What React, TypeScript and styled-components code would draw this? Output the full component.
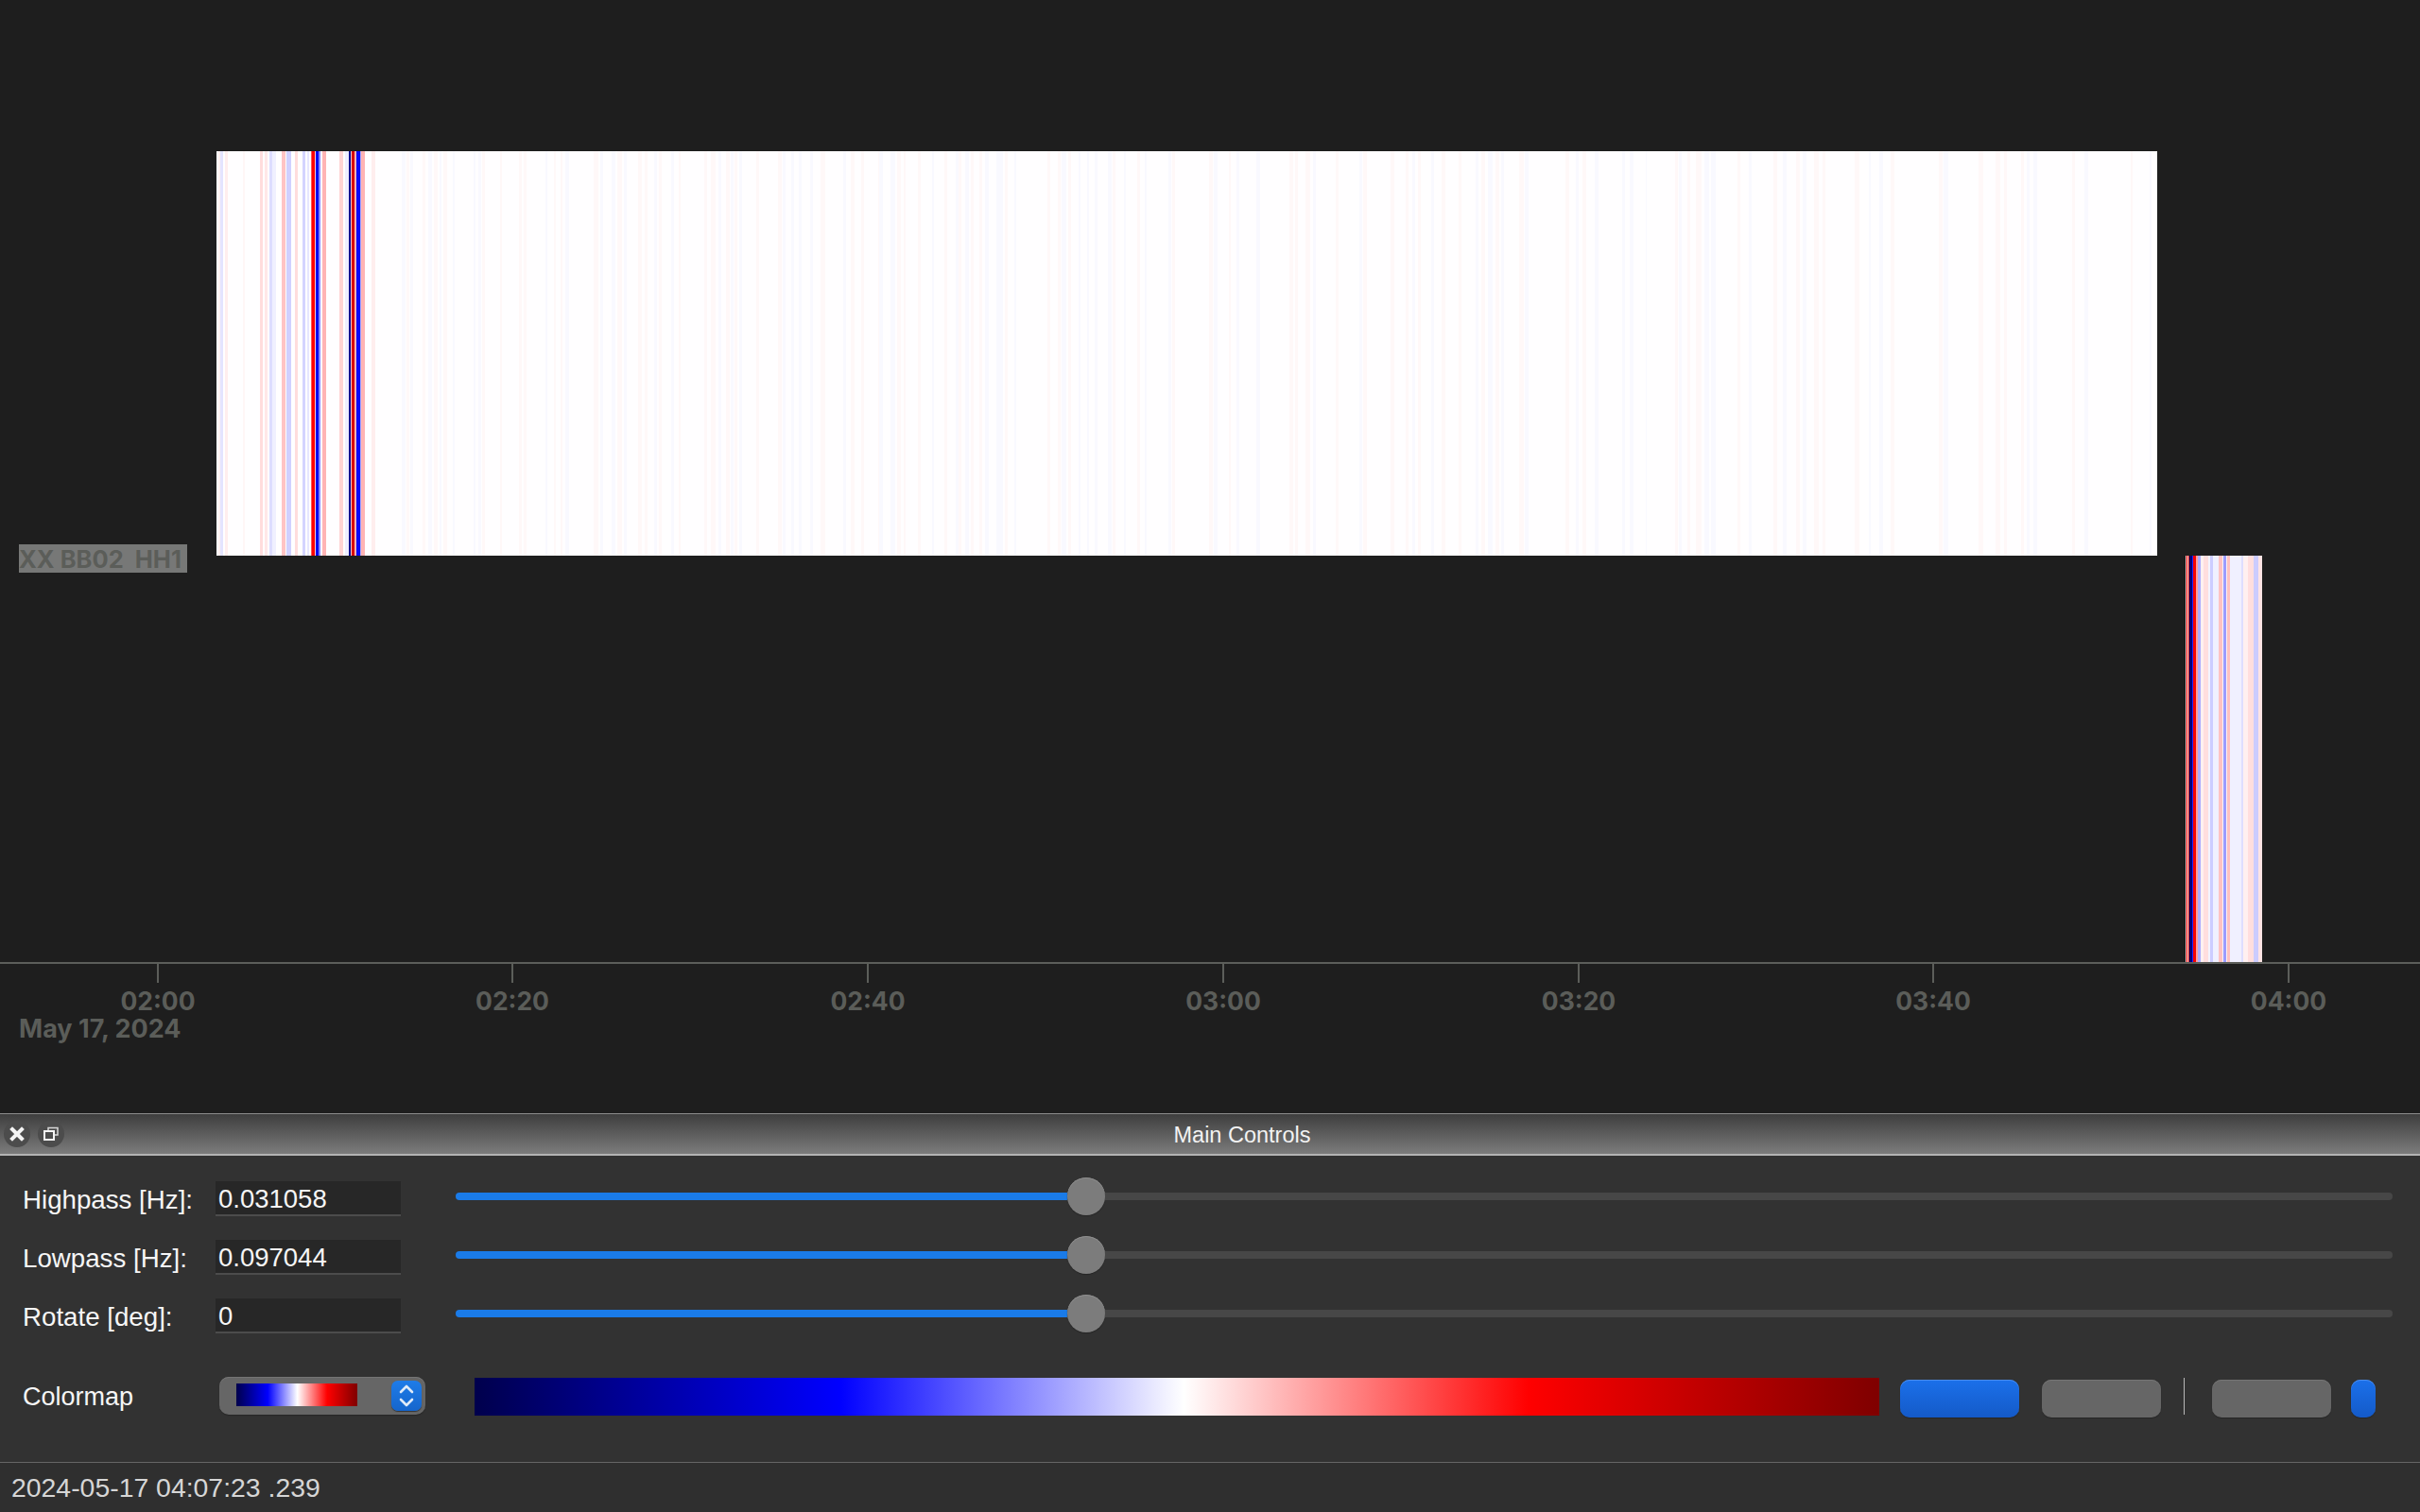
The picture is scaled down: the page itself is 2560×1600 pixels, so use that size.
import React from 'react';
import styled, { createGlobalStyle } from 'styled-components';

const GlobalStyle = createGlobalStyle`
  html, body {
    margin: 0;
    height: 100%;
    background: #1e1e1e;
    overflow: hidden;
  }
  * {
    box-sizing: border-box;
  }
`;

const PINK = '#fff8f8';
const LAV = '#f9f9ff';

type Span = [number, number, number]; // start px, end px, 0 = pink / 1 = lavender

const toStripes = (base: number, scale: number, spans: Span[]) =>
    spans.map(([a, b, kind]) => ({ x: base + a / scale, w: (b - a) / scale, color: kind ? LAV : PINK }));

const faintStripes = [
    ...toStripes(380, 3, [
        [38, 50, 0], [135, 147, 1], [150, 160, 0], [162, 172, 1], [200, 210, 0], [220, 230, 1], [238, 248, 0],
        [255, 262, 1], [268, 278, 0], [296, 302, 1], [363, 370, 1], [378, 386, 1], [390, 400, 0], [448, 452, 0],
        [507, 517, 0], [522, 530, 0], [590, 597, 1], [617, 625, 0], [640, 645, 0], [655, 665, 1], [745, 760, 0],
        [765, 775, 1], [800, 812, 1], [820, 835, 0], [840, 850, 1], [885, 897, 0], [905, 915, 0], [937, 945, 1],
        [950, 960, 0], [990, 1000, 1], [1015, 1020, 0], [1095, 1105, 0], [1115, 1130, 0], [1140, 1150, 1],
        [1165, 1175, 0], [1180, 1187, 1], [1190, 1200, 0], [1205, 1215, 1], [1260, 1270, 0], [1330, 1340, 0],
        [1345, 1352, 1], [1372, 1380, 1], [1395, 1405, 1], [1430, 1440, 1], [1465, 1478, 0], [1535, 1545, 1],
    ]),
    ...toStripes(900, 2.24, [
        [0, 10, 0], [25, 32, 0], [65, 72, 0], [68, 76, 1], [95, 105, 1], [110, 118, 0], [125, 130, 0], [158, 165, 0],
        [193, 198, 1], [222, 228, 0], [248, 255, 1], [255, 262, 0], [272, 280, 1], [285, 292, 0], [305, 312, 0],
        [318, 326, 1], [345, 360, 1], [365, 372, 0], [388, 393, 1], [465, 472, 0], [490, 498, 0], [500, 510, 1],
        [515, 522, 0], [540, 545, 1], [560, 565, 1], [578, 584, 1], [610, 618, 1], [620, 628, 0], [648, 652, 1],
        [678, 685, 0], [697, 702, 1], [752, 760, 1], [762, 768, 0], [850, 858, 0], [860, 868, 1], [895, 900, 0],
        [915, 920, 1], [962, 970, 1], [1040, 1048, 0], [1052, 1060, 0], [1078, 1088, 0], [1095, 1102, 1],
        [1150, 1156, 0], [1205, 1212, 1], [1215, 1222, 0], [1280, 1288, 0], [1315, 1322, 0], [1330, 1338, 1],
        [1343, 1350, 0], [1375, 1383, 1], [1400, 1410, 0], [1440, 1447, 0], [1480, 1487, 1], [1495, 1503, 0],
        [1510, 1520, 1], [1527, 1537, 0], [1540, 1548, 1],
    ]),
    ...toStripes(1600, 2.24, [
        [15, 27, 0], [28, 38, 1], [125, 135, 0], [150, 157, 1], [165, 175, 0], [195, 203, 1], [260, 267, 1],
        [278, 287, 1], [315, 318, 1], [385, 392, 0], [395, 402, 1], [415, 422, 0], [435, 447, 0], [455, 465, 1],
        [470, 482, 1], [532, 540, 0], [560, 567, 1], [618, 628, 0], [640, 650, 1], [672, 680, 0], [688, 696, 1],
        [715, 725, 0], [735, 742, 0], [810, 822, 0], [845, 850, 1], [870, 878, 1], [897, 905, 0], [1010, 1020, 0],
        [1022, 1033, 1], [1105, 1115, 0], [1145, 1155, 0], [1165, 1172, 0], [1205, 1212, 0], [1218, 1225, 1],
        [1235, 1243, 1], [1325, 1332, 0], [1355, 1365, 1], [1465, 1470, 0], [1510, 1515, 1],
    ]),
];

// strong part at the start of the long trace, [x0, x1, colour]
const burstStripes: [number, number, string][] = [
    [231, 233, '#fff0f0'], [233, 236, '#e4e4ff'], [238, 241, '#ffeeee'], [257, 259, '#fff6f6'],
    [275, 278, '#ffdddd'], [280, 283, '#ffe8e8'], [285, 288, '#ddddff'], [288, 292, '#f0f0ff'],
    [298, 302, '#ffc4c4'], [303, 308, '#d0d0ff'], [312, 315, '#ffdddd'], [320, 323, '#d4d4ff'], [325, 327, '#e6e6ff'],
    [329, 330, '#ff5555'], [330, 333, '#ff0000'], [333, 334, '#ffd0d0'], [334, 337, '#0000f0'], [337, 339, '#8888ff'],
    [341, 345, '#ffb4b4'], [359, 363, '#ffd4d4'], [365, 369, '#eeeeff'], [369, 371, '#000090'], [371, 372, '#ffc8c8'],
    [372, 375, '#d80000'], [375, 377, '#ffb0b0'], [377, 381, '#0808f8'], [381, 382, '#aaaaff'], [382, 386, '#ffb4b4'],
    [393, 397, '#ffeeee'],
];

const shortStripes: [number, number, string][] = [
    [2312, 2313, '#ffc8c8'], [2313, 2314, '#e00000'], [2314, 2315, '#ffffff'], [2315, 2316, '#c00000'],
    [2316, 2319, '#00007c'], [2319, 2320, '#2222ff'], [2320, 2323, '#f40000'], [2323, 2325, '#ff9c9c'],
    [2325, 2328, '#aaaaff'], [2328, 2331, '#fff0f0'], [2331, 2336, '#ffdede'], [2336, 2338, '#f4f4ff'],
    [2338, 2341, '#ccccff'], [2341, 2347, '#f0f0ff'], [2347, 2351, '#ffc2c2'], [2351, 2352, '#f4f4ff'],
    [2352, 2355, '#9c9cff'], [2355, 2356, '#fff0f0'], [2356, 2359, '#ffc2c2'], [2359, 2371, '#f0f0ff'],
    [2371, 2373, '#dedeff'], [2373, 2378, '#fff0f0'], [2378, 2384, '#ffdede'], [2384, 2389, '#ccccff'], [2389, 2393, '#ffe4e4'],
];

const TICKS = [
    { x: 167, label: '02:00' },
    { x: 542, label: '02:20' },
    { x: 918, label: '02:40' },
    { x: 1294, label: '03:00' },
    { x: 1670, label: '03:20' },
    { x: 2045, label: '03:40' },
    { x: 2421, label: '04:00' },
];

const TRACE_BOTTOM = 1018;

const PlotCanvas = () => (
    <PlotSvg width={2560} height={1040} shapeRendering="crispEdges">
        <rect x={229} y={160} width={2053} height={428} fill="#fffeff" />
        {faintStripes.map((s, i) => (
            <rect key={i} x={s.x} y={160} width={s.w} height={428} fill={s.color} />
        ))}
        {burstStripes.map(([a, b, color]) => (
            <rect key={a} x={a} y={160} width={b - a} height={428} fill={color} />
        ))}
        <rect x={2312} y={588} width={81} height={430} fill="#ffffff" />
        {shortStripes.map(([a, b, color]) => (
            <rect key={a} x={a} y={588} width={b - a} height={430} fill={color} />
        ))}
        <rect x={0} y={TRACE_BOTTOM} width={2560} height={2} fill="#5c5e5a" />
        {TICKS.map((t) => (
            <rect key={t.x} x={t.x - 1} y={TRACE_BOTTOM + 2} width={2} height={20} fill="#5c5e5a" />
        ))}
    </PlotSvg>
);

const CloseIcon = () => (
    <svg width={16} height={16} viewBox="0 0 16 16">
        <path d="M3 3 L13 13 M13 3 L3 13" stroke="#f4f4f4" strokeWidth={4} strokeLinecap="square" />
    </svg>
);

const FloatIcon = () => (
    <svg width={18} height={18} viewBox="0 0 18 18" fill="none">
        <path d="M6 5 V2.5 H16 V10 H12.5" stroke="#d8d8d8" strokeWidth={1.5} />
        <rect x={2} y={6} width={10} height={9} stroke="#f4f4f4" strokeWidth={2} />
    </svg>
);

const StepperIcon = () => (
    <svg width={18} height={28} viewBox="0 0 18 28" fill="none">
        <path d="M3 10 L9 4 L15 10 M3 18 L9 24 L15 18" stroke="#dfeaf8" strokeWidth={2.6} strokeLinecap="round" strokeLinejoin="round" />
    </svg>
);

const SliderControl = ({ value }: { value: string }) => (
    <Slider>
        <SliderFill style={{ width: `${value}px` }} />
        <SliderKnob />
        <SliderRest />
    </Slider>
);

const ROWS = [
    { label: 'Highpass [Hz]:', value: '0.031058' },
    { label: 'Lowpass [Hz]:', value: '0.097044' },
    { label: 'Rotate [deg]:', value: '0' },
];

const App = () => (
    <Page>
        <GlobalStyle />
        <PlotArea>
            <PlotCanvas />
            <ChannelLabel>XX BB02{'  '}HH1</ChannelLabel>
            <AxisLabels>
                {TICKS.map((t) => (
                    <TickLabel key={t.x} $x={t.x}>{t.label}</TickLabel>
                ))}
                <DateLabel>May 17, 2024</DateLabel>
            </AxisLabels>
        </PlotArea>

        <Dock>
            <TitleBar>
                <TitleIcons>
                    <TitleIconButton><CloseIcon /></TitleIconButton>
                    <TitleIconButton><FloatIcon /></TitleIconButton>
                </TitleIcons>
                <Title>Main Controls</Title>
            </TitleBar>
            <Controls>
                {ROWS.map((row) => (
                    <ControlRow key={row.label}>
                        <RowLabel>{row.label}</RowLabel>
                        <ValueInput readOnly value={row.value} />
                        <SliderControl value="647" />
                    </ControlRow>
                ))}
                <ColormapRow>
                    <ColormapLabel>Colormap</ColormapLabel>
                    <ColormapSelect>
                        <Swatch />
                        <Stepper><StepperIcon /></Stepper>
                    </ColormapSelect>
                    <ColorBar />
                    <ActionButton $variant="primary" />
                    <ActionButton $variant="neutral" />
                    <VerticalRule />
                    <ActionButton $variant="neutral" />
                    <NarrowButton />
                </ColormapRow>
            </Controls>
            <StatusBar>2024-05-17 04:07:23 .239</StatusBar>
        </Dock>
    </Page>
);

export default App;

const SEISMIC = `#00004c 0%, #0000ff 26%, #ffffff 50.5%, #ff0000 75%, #7f0000 100%`;
const UI_FONT = `"Liberation Sans", Arial, sans-serif`;

const Page = styled.div`
    width: 2560px;
    height: 1600px;
    display: flex;
    flex-direction: column;
    background: #1e1e1e;
    font-family: ${UI_FONT};
`;

const PlotArea = styled.div`
    position: relative;
    height: 1178px;
    flex: none;
    background: #1e1e1e;
`;

const PlotSvg = styled.svg`
    display: block;
`;

const ChannelLabel = styled.div`
    position: absolute;
    left: 20px;
    top: 576px;
    width: 178px;
    height: 30px;
    background: #777877;
    color: #5b5d59;
    font: 700 25.5px/32px Inter, sans-serif;
    white-space: pre;
`;

const AxisLabels = styled.div`
    position: relative;
    height: 138px;
`;

const TickLabel = styled.div<{ $x: number }>`
    position: absolute;
    left: ${({ $x }) => $x}px;
    top: 1px;
    transform: translateX(-50%);
    color: #5b5d59;
    font: 700 26.5px/36px Inter, sans-serif;
`;

const DateLabel = styled.div`
    position: absolute;
    left: 20px;
    top: 31px;
    color: #5b5d59;
    font: 700 27px/36px Inter, sans-serif;
`;

const Dock = styled.div`
    flex: 1;
    display: flex;
    flex-direction: column;
    background: #323232;
`;

const TitleBar = styled.div`
    height: 45px;
    flex: none;
    display: flex;
    align-items: center;
    padding-left: 4px;
    border-top: 1px solid #8c8c8c;
    border-bottom: 2px solid #b4b4b4;
    background: linear-gradient(#3e3e3e, #7c7c7c);
`;

const TitleIcons = styled.div`
    width: 64px;
    display: flex;
    gap: 8px;
`;

const TitleIconButton = styled.div`
    width: 28px;
    height: 28px;
    border-radius: 50%;
    display: flex;
    align-items: center;
    justify-content: center;
    background: #4c4c4c;
`;

const Title = styled.div`
    flex: 1;
    padding-top: 3px;
    text-align: center;
    color: #f2f2f2;
    font-size: 23.5px;
`;

const Controls = styled.div`
    height: 324px;
    flex: none;
    padding: 27px 29px 0 24px;
    display: flex;
    flex-direction: column;
    gap: 25px;
`;

const ControlRow = styled.div`
    height: 37px;
    display: flex;
    align-items: center;
`;

const RowLabel = styled.div`
    width: 204px;
    padding-top: 2px;
    color: #f6f6f6;
    font-size: 27.7px;
`;

const ValueInput = styled.input`
    width: 196px;
    height: 37px;
    padding: 3px 0 0 3px;
    border: 0;
    border-bottom: 2px solid #4c4c4c;
    outline: none;
    background: #272727;
    color: #f6f6f6;
    font-family: ${UI_FONT};
    font-size: 27.5px;
`;

const Slider = styled.div`
    flex: 1;
    height: 40px;
    margin: 0 0 5px 58px;
    display: flex;
    align-items: center;
`;

const SliderFill = styled.div`
    height: 8px;
    border-radius: 4px 0 0 4px;
    background: #1a7be8;
`;

const SliderKnob = styled.div`
    width: 40px;
    height: 40px;
    flex: none;
    border-radius: 50%;
    background: #7c7c7c;
    box-shadow: inset 0 1px 0 #8e8e8e, 0 1px 1px #262626;
`;

const SliderRest = styled.div`
    flex: 1;
    height: 8px;
    border-radius: 0 4px 4px 0;
    background: #474747;
`;

const ColormapRow = styled.div`
    height: 43px;
    margin-top: 21px;
    display: flex;
    align-items: flex-start;
`;

const ColormapLabel = styled.div`
    width: 208px;
    line-height: 43px;
    color: #f6f6f6;
    font-size: 27px;
`;

const ColormapSelect = styled.div`
    width: 218px;
    height: 40px;
    padding: 7px 4px 0 18px;
    display: flex;
    justify-content: space-between;
    border-radius: 10px;
    background: #666;
    box-shadow: inset 0 1px 0 #757575, 0 1px 1px #262626;
`;

const Swatch = styled.div`
    width: 128px;
    height: 24px;
    background: linear-gradient(90deg, ${SEISMIC});
`;

const Stepper = styled.div`
    width: 32px;
    height: 32px;
    margin-top: -3px;
    display: flex;
    align-items: center;
    justify-content: center;
    border-radius: 7px;
    background: linear-gradient(#1f7ce8, #1565cc);
    box-shadow: 0 1px 1px #333;
`;

const ColorBar = styled.div`
    width: 1486px;
    height: 40px;
    margin: 1px 0 0 52px;
    background: linear-gradient(90deg, ${SEISMIC});
`;

const ActionButton = styled.button<{ $variant: 'primary' | 'neutral' }>`
    width: 126px;
    height: 40px;
    margin: 3px 24px 0 0;
    padding: 0;
    border: 0;
    border-radius: 10px;
    background: ${({ $variant }) => ($variant === 'primary' ? 'linear-gradient(#1b70ea, #145ac8)' : '#666')};
    box-shadow: inset 0 1px 0 ${({ $variant }) => ($variant === 'primary' ? '#4a8cec' : '#757575')}, 0 1px 1px #262626;
    ${ColorBar} + & {
        margin-left: 22px;
    }
`;

const VerticalRule = styled.div`
    width: 1px;
    height: 39px;
    margin: 1px 29px 0 0;
    background: #b8b8b8;
`;

const NarrowButton = styled.button`
    width: 26px;
    height: 40px;
    margin: 3px 0 0 -3px;
    padding: 0;
    border: 0;
    border-radius: 10px;
    background: linear-gradient(#1b70ea, #145ac8);
    box-shadow: inset 0 1px 0 #4a8cec, 0 1px 1px #262626;
`;

const StatusBar = styled.div`
    flex: 1;
    padding-left: 12px;
    display: flex;
    align-items: center;
    border-top: 1px solid #666;
    background: #2f2f2f;
    color: #d6d6d6;
    font-size: 28.4px;
`;
